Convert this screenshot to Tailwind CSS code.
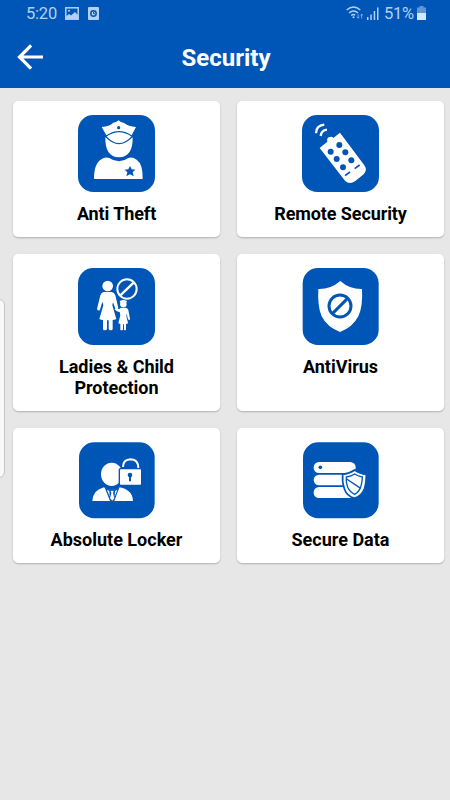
<!DOCTYPE html>
<html lang="en">
<head>
<meta charset="utf-8">
<title>Security</title>
<script src="https://cdn.jsdelivr.net/npm/@tailwindcss/browser@4"></script>
</head>
<body class="relative h-[800px] w-[450px] overflow-hidden bg-[#e7e7e7] font-['Roboto',sans-serif] text-black">
<header class="h-[88px] bg-[#0056b6] text-white">
  <div class="flex h-7 items-center pr-6 pl-[26px] text-[#b3d1f3]">
    <span class="w-[39px] text-[16.5px] leading-7 tracking-[-0.2px]">5:20</span>
    <svg class="mb-px h-[13px] w-[14px]" viewBox="0 0 14 13"><rect x=".8" y=".8" width="12.4" height="11.4" fill="none" stroke="currentColor" stroke-width="1.5"/><path d="M1 9.5 4 7l2 1.5L10 5l3 3v4H1z" fill="currentColor"/><circle cx="4" cy="3.8" r="1" fill="currentColor"/></svg>
    <svg class="mb-px ml-[9px] h-[13px] w-[11px]" viewBox="0 0 11 13"><rect width="11" height="13" rx="1" fill="currentColor"/><circle cx="5.5" cy="6.5" r="2.7" fill="none" stroke="#0056b6" stroke-width="1.5"/><path d="M5.5 4.7v2H7" fill="none" stroke="#0056b6"/></svg>
    <svg class="mb-[2px] ml-auto h-[14px] w-[18px]" viewBox="0 0 18 14" fill="none" stroke="currentColor" stroke-width="1.4"><path d="M.7 4.1Q7.5-2 14.3 4.1M3 7Q7.5 2.8 12 7M5.2 9.6Q7.5 7.5 9.2 9.3"/><circle cx="7.5" cy="11.2" r="1" fill="currentColor" stroke="none"/><path d="M12.2 8v4.2m-1.4-1.4 1.4 1.4 1.2-1.2M15.6 12.500V8.200m-1.300 1.300 1.300-1.300 1.400 1.300" stroke-width=".9" opacity=".7"/></svg>
    <svg class="mb-[2px] ml-[2px] h-[13px] w-[13px]" viewBox="0 0 13 13" fill="currentColor"><path d="M1 10h1.500v3H1zM4.300 7.500h1.500V13H4.300zM7.700 4h1.500v9H7.700zM11 .500h1.500V13H11z"/></svg>
    <span class="ml-[5px] w-[31px] text-[16.5px] leading-7 tracking-[-0.3px]">51%</span>
    <svg class="mb-[2px] ml-[2px] h-[14px] w-[9px]" viewBox="0 0 9 14"><path d="M2.500 0h4v1.500H9V14H0V1.500h2.500z" fill="#5e96d7"/><path d="M0 7h9v7H0z" fill="#d5e7fb"/></svg>
  </div>
  <div class="grid h-[60px] grid-cols-[60px_1fr_58px] items-center">
    <svg class="mb-[3px] ml-[17px] h-[26px] w-[27px]" viewBox="0 0 27 26" fill="none" stroke="#fff" stroke-width="3.2"><path d="M14.100 1.400 2.500 13l11.600 11.600M2.500 13H26"/></svg>
    <h1 class="text-center text-[24px] font-bold">Security</h1>
  </div>
</header>
<main class="grid grid-cols-2 grid-rows-[136px_157px_135px] gap-x-[17px] gap-y-[17px] pt-[13px] pr-[6px] pl-[13px] text-center text-[18px] leading-[21px] font-bold">
  <section class="flex flex-col items-center rounded-[5px] bg-white pt-[14px] shadow-[0_1px_2px_#0000003d]">
    <svg class="h-[77px] w-[77px]" viewBox="24 30 231 231"><rect x="24" y="30" width="231" height="231" rx="46" fill="#0056b6"/>
      <path d="M106 97Q105 157 147 157Q189 157 188 97Q147 127 106 97Z" fill="#fff"/>
      <path d="M107 94Q147 66 187 94Q147 138 107 94Z" fill="#fff" stroke="#0056b6" stroke-width="4"/>
      <path d="M95 66Q118 64 130 53Q141 51 146 46Q151 52 162 54Q175 65 198 66L185 91Q147 65 109 91Z" fill="#fff"/>
      <circle cx="146" cy="68" r="5" fill="#0056b6"/>
      <path d="M72 222Q71 171 101 159Q109 156 118 159Q147 179 175 159Q187 155 200 164Q219 177 218 222Z" fill="#fff"/>
      <path d="m180 183 5 10 11 1-8 8 3 12-11-6-11 6 3-12-8-8 11-1z" fill="#0056b6"/>
    </svg>
    <h2 class="mt-[11px] tracking-[-0.1px]">Anti Theft</h2>
  </section>
  <section class="flex flex-col items-center rounded-[5px] bg-white pt-[14px] shadow-[0_1px_2px_#0000003d]">
    <svg class="h-[77px] w-[77px]" viewBox="21 30 231 231"><rect x="21" y="30" width="231" height="231" rx="46" fill="#0056b6"/>
      <path d="M63 85Q63 62 88 59M77 93Q79 76 96 74" fill="none" stroke="#fff" stroke-width="7"/>
      <path d="M74 129 97 110Q94 98 104 96Q113 94 115 99L135 83 208 181Q218 195 206 208L180 229Q163 240 150 227Z" fill="#fff"/>
      <g fill="#0056b6"><circle cx="133" cy="120" r="9"/><circle cx="107" cy="140" r="9"/><circle cx="151" cy="142" r="9"/><circle cx="125" cy="162" r="9"/><circle cx="169" cy="166" r="9"/><circle cx="144" cy="187" r="9"/></g>
      <path d="m150 212 15-11M179 191l15-11" stroke="#0056b6" stroke-width="5"/>
    </svg>
    <h2 class="mt-[11px] tracking-[-0.1px]">Remote Security</h2>
  </section>
  <section class="flex flex-col items-center rounded-[5px] bg-white pt-[14px] shadow-[0_1px_2px_#0000003d]">
    <svg class="h-[77px] w-[77px]" viewBox="24 24 231 231"><rect x="24" y="24" width="231" height="231" rx="46" fill="#0056b6"/>
      <circle cx="113" cy="78" r="16" fill="#fff"/>
      <path d="M101 96H125Q133 97 136 106L145 144Q145 151 138 151L129 127 127 136 139 177Q133 180 128 180V207Q128 211 122 211 116 211 116 206V181H111V206Q111 211 105 211 99 211 99 207V180Q93 180 88 177L100 136 97 125 90 149Q85 155 81 147L91 106Q94 97 101 96Z" fill="#fff"/>
      <path d="M149 123 160 119 171 123 169 128Q173 141 160 142 147 141 151 128Z" fill="#fff"/>
      <path d="M153 143H167Q173 144 175 150L180 176Q179 183 174 178L170 161 169 167 174 190Q171 192 168 192V209Q165 213 162 209V193H159V209Q154 213 151 209V192L145 190 151 166 149 156Q140 157 134 148L138 143 147 148Z" fill="#fff"/>
      <circle cx="171" cy="87" r="29" fill="none" stroke="#fff" stroke-width="6"/><path d="m151 106 40-38" stroke="#fff" stroke-width="7"/>
    </svg>
    <h2 class="mt-[11px] w-[130px] tracking-[-0.05px]">Ladies &amp; Child Protection</h2>
  </section>
  <section class="flex flex-col items-center rounded-[5px] bg-white pt-[14px] shadow-[0_1px_2px_#0000003d]">
    <svg class="h-[77px] w-[77px]" viewBox="22 24 231 231"><rect x="24" y="24" width="228" height="231" rx="46" fill="#0056b6"/>
      <path d="M137 63Q165 88 202 87Q205 140 191 169Q175 201 136 216Q97 201 81 169Q68 139 71 87Q108 88 137 63Z" fill="#fff"/>
      <circle cx="136" cy="138" r="33" fill="none" stroke="#0056b6" stroke-width="9"/><path d="m114 160 44-44" stroke="#0056b6" stroke-width="9"/>
    </svg>
    <h2 class="mt-[11px]">AntiVirus</h2>
  </section>
  <section class="flex flex-col items-center rounded-[5px] bg-white pt-[14px] shadow-[0_1px_2px_#0000003d]">
    <svg class="h-[77px] w-[77px]" viewBox="25 21 231 231"><rect x="28" y="22" width="227" height="228" rx="46" fill="#0056b6"/>
      <ellipse cx="126" cy="118" rx="32" ry="35" fill="#fff"/>
      <path d="M68 198Q69 166 103 157Q128 174 150 157Q189 165 190 198Z" fill="#fff"/>
      <path d="M104 155Q128 173 150 155L134 198H121Z" fill="#0056b6"/><path d="M112 164 119 168 120 185zM143 164 136 168 135 185zM123 167h9l-2 7 4 16-6 7-7-7 4-16z" fill="#fff"/>
      <rect x="147" y="99" width="72" height="54" rx="5" fill="#0056b6"/><rect x="151" y="103" width="63" height="46" rx="2" fill="#fff"/>
      <path d="M160 96Q160 74 183 73 206 74 206 99" fill="none" stroke="#fff" stroke-width="6"/>
      <circle cx="181" cy="120" r="7" fill="#0056b6"/><path d="M181 120v19" stroke="#0056b6" stroke-width="6"/>
    </svg>
    <h2 class="mt-[10px]">Absolute Locker</h2>
  </section>
  <section class="flex flex-col items-center rounded-[5px] bg-white pt-[14px] shadow-[0_1px_2px_#0000003d]">
    <svg class="h-[77px] w-[77px]" viewBox="22 21 231 231"><rect x="25" y="22" width="227" height="228" rx="46" fill="#0056b6"/>
      <g fill="#fff"><rect x="57" y="81" width="126" height="33" rx="16"/><rect x="57" y="119" width="126" height="32" rx="16"/><rect x="57" y="156" width="126" height="33" rx="16"/></g><circle cx="77" cy="97" r="5.500" fill="#0056b6"/>
      <path d="M180 105Q195 116 215 118 215 143 210 160 203 181 180 190 156 183 149 161 142 142 144 118 164 116 180 105Z" fill="#fff" stroke="#0056b6" stroke-width="5"/>
      <path d="M180 117Q189 123 203 126 203 143 198 156 193 171 180 178 166 172 159 157 153 142 155 126 170 124 180 117Z" fill="#fff" stroke="#0056b6" stroke-width="4"/><path d="m156 132 42 28" stroke="#0056b6" stroke-width="4"/>
    </svg>
    <h2 class="mt-[10px]">Secure Data</h2>
  </section>
</main>
<div class="absolute top-[299px] -left-2 h-[179px] w-[13px] rounded-[6px] border border-[#c4c4c4] bg-[#f9f9f9]"></div>
</body>
</html>
